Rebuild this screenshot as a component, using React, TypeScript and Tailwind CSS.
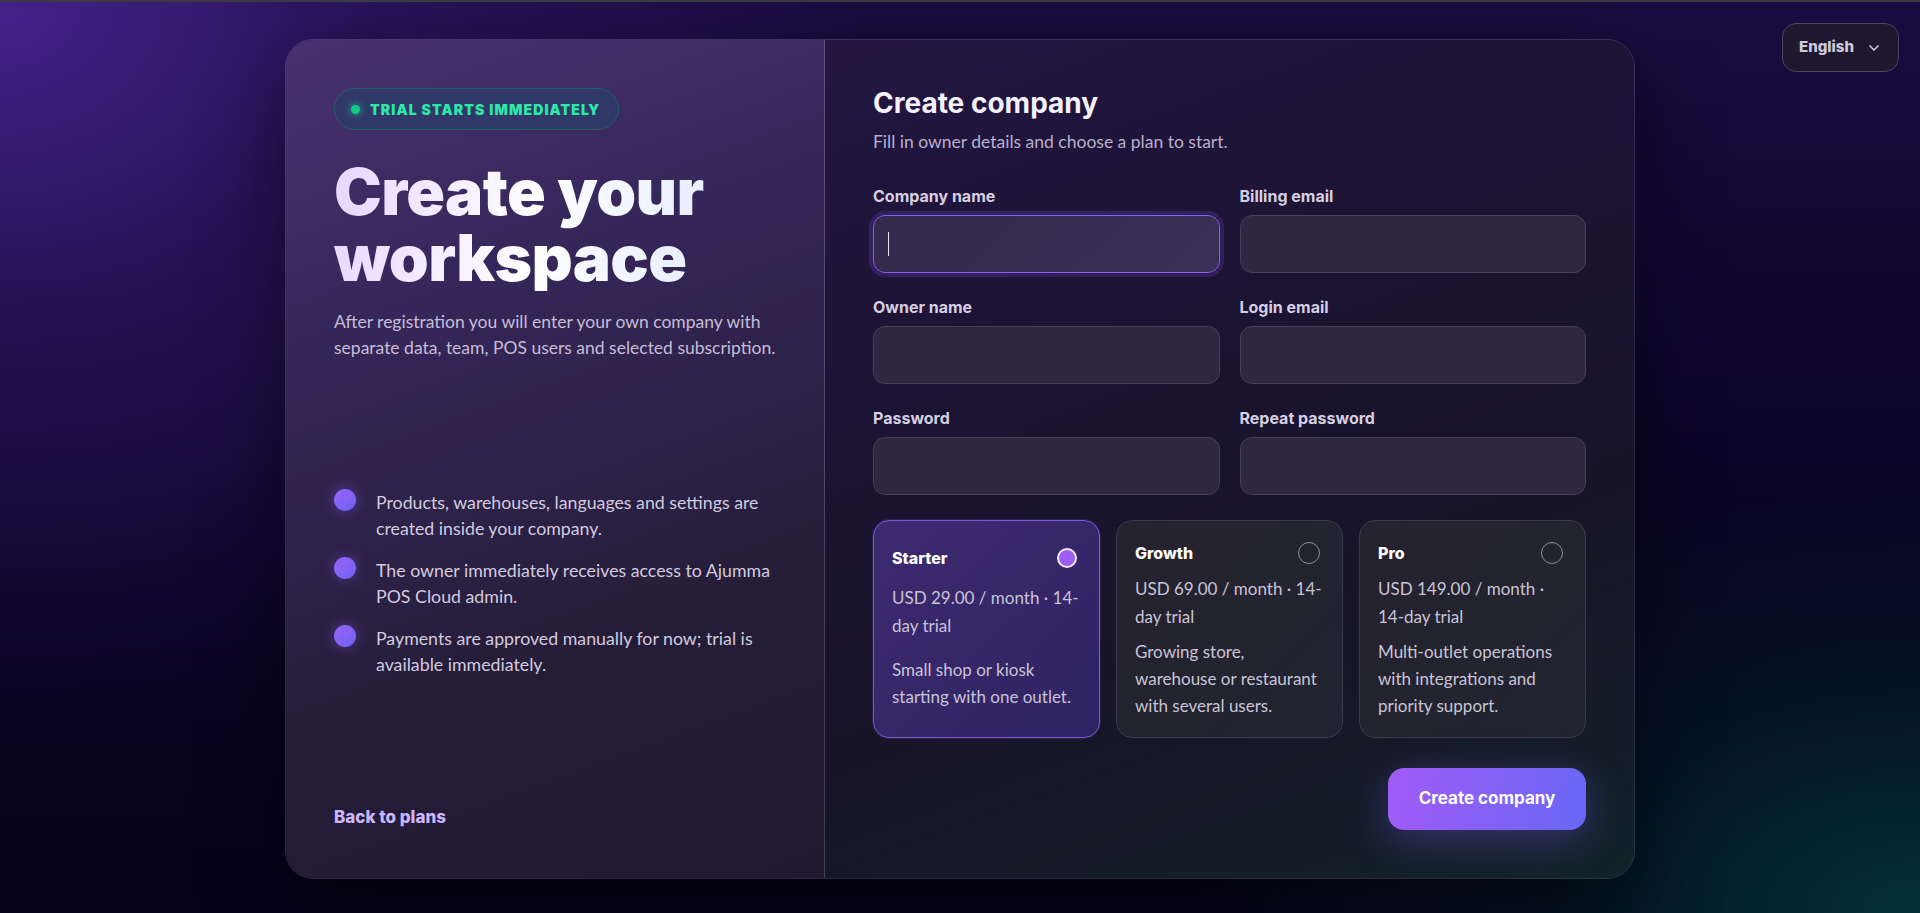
import { ChevronDown } from 'lucide-react';

const fields = [
  { label: 'Company name', type: 'text', focused: true },
  { label: 'Billing email', type: 'email' },
  { label: 'Owner name', type: 'text' },
  { label: 'Login email', type: 'email' },
  { label: 'Password', type: 'password' },
  { label: 'Repeat password', type: 'password' },
];

const perks = [
  'Products, warehouses, languages and settings are created inside your company.',
  'The owner immediately receives access to Ajumma POS Cloud admin.',
  'Payments are approved manually for now; trial is available immediately.',
];

const plans = [
  { name: 'Starter', price: 'USD 29.00 / month · 14-day trial', desc: 'Small shop or kiosk starting with one outlet.', selected: true },
  { name: 'Growth', price: 'USD 69.00 / month · 14-day trial', desc: 'Growing store, warehouse or restaurant with several users.' },
  { name: 'Pro', price: 'USD 149.00 / month · 14-day trial', desc: 'Multi-outlet operations with integrations and priority support.' },
];

function PlanCard({ plan }: { plan: (typeof plans)[number] }) {
  return (
    <label
      className={`grid rounded-2xl border px-[18px] pt-5 pb-[18px] ${
        plan.selected
          ? 'border-[#7a5ad6] bg-[linear-gradient(135deg,#3d2a70_0%,#2e2462_100%)] shadow-[0_0_0_1px_rgba(139,92,246,0.15)]'
          : 'border-[#3c3a4c] bg-[linear-gradient(135deg,#26222f_0%,#1f2530_100%)]'
      }`}
    >
      <div className="flex items-center justify-between">
        <span className="font-['Inter',sans-serif] text-[16px] font-extrabold text-white">{plan.name}</span>
        {plan.selected ? (
          <span className="mr-[4px] h-5 w-5 rounded-full border-2 border-[#efeaff] bg-[#9d5cf7]" />
        ) : (
          <span className="mr-[4px] h-[22px] w-[22px] rounded-full border-[1.5px] border-[#8d8a99]" />
        )}
      </div>
      <p className="mt-[10px] text-[17px] leading-[28px] text-[#c9c3d6]">{plan.price}</p>
      <p className="mt-[7px] text-[17px] leading-[27px] text-[#c9c3d6]">{plan.desc}</p>
    </label>
  );
}

export default function App() {
  return (
    <div className="relative min-h-screen overflow-hidden border-t-2 border-[#3a3a40] bg-[#07031a] bg-[radial-gradient(ellipse_45%_80%_at_0%_0%,#44228a_0%,rgba(52,26,110,0.6)_40%,transparent_100%),radial-gradient(ellipse_38%_48%_at_100%_100%,#03313a_0%,rgba(2,32,42,0.55)_50%,transparent_100%),linear-gradient(180deg,#190c40_0%,#0a0426_55%,#06021a_100%)] font-['Lato',sans-serif] text-white">
      <button className="absolute right-[21px] top-[21px] flex h-[49px] items-center gap-3 rounded-[14px] border border-[#4a4360] bg-[#1f1930] px-4 font-['Inter',sans-serif] text-[15px] font-extrabold text-[#d0c9de]">
        English
        <ChevronDown className="h-4 w-4" strokeWidth={2.5} />
      </button>

      <div className="flex justify-center pt-[37px] pb-[35px]">
        <div className="grid w-[1350px] grid-cols-[539px_1fr] overflow-hidden rounded-[28px] border border-white/15 shadow-[0_30px_80px_rgba(0,0,0,0.5)]">
          {/* left intro */}
          <section className="flex flex-col border-r border-white/15 bg-[linear-gradient(160deg,#49316f_0%,#35275a_30%,#251d38_70%,#211a30_100%)] p-12">
            <div className="flex h-[42px] w-fit items-center gap-[10px] rounded-full border border-[#1f6068] bg-[#2f3a68]/90 pl-[16px] pr-[18px]">
              <span className="h-[9px] w-[9px] rounded-full bg-[#16c98b] shadow-[0_0_8px_#16c98b]" />
              <span className="font-['Inter',sans-serif] text-[14px] font-black uppercase tracking-[0.08em] text-[#2ee8a8]">
                Trial starts immediately
              </span>
            </div>

            <h1 className="mt-[29px] bg-[linear-gradient(100deg,#e6d6ff_0%,#ffffff_45%,#dde6ff_100%)] bg-clip-text font-['Inter',sans-serif] text-[64px] font-black leading-[66px] tracking-[-0.01em] text-transparent">
              Create your
              <br />
              workspace
            </h1>
            <p className="mt-[18px] text-[17.5px] leading-[26px] text-[#c6bdd6]">
              After registration you will enter your own company with separate data, team, POS users and selected subscription.
            </p>

            <ul className="mt-[128px] flex flex-col gap-4">
              {perks.map((perk) => (
                <li key={perk} className="flex gap-5">
                  <span className="h-[22px] w-[22px] shrink-0 rounded-full bg-[linear-gradient(135deg,#9a63f7_0%,#6c63f2_100%)] shadow-[0_0_14px_rgba(139,92,246,0.45)]" />
                  <span className="text-[17.75px] leading-[26px] text-[#d2cadf]">{perk}</span>
                </li>
              ))}
            </ul>

            <a href="#" className="mt-auto font-['Inter',sans-serif] text-[17px] font-extrabold text-[#c9b6ff]">
              Back to plans
            </a>
          </section>

          {/* right form */}
          <section className="flex flex-col bg-[linear-gradient(160deg,#231742_0%,#1b1333_35%,#171427_65%,#122329_100%)] p-12">
            <h2 className="font-['Inter',sans-serif] text-[28px] font-bold leading-[30px] text-[#f5f1ff]">Create company</h2>
            <p className="mt-3 text-[17.5px] leading-6 text-[#b9afcc]">Fill in owner details and choose a plan to start.</p>

            <div className="mt-8 grid grid-cols-2 gap-x-5 gap-y-6">
              {fields.map((f) => (
                <div key={f.label} className="flex flex-col gap-[9px]">
                  <span className="font-['Inter',sans-serif] text-[16px] font-bold leading-5 text-[#d6cfe2]">{f.label}</span>
                  <div className="relative">
                    <input
                      type={f.type}
                      className={`h-[58px] w-full rounded-xl border px-4 text-[16px] text-white caret-transparent outline-none ${
                        f.focused
                          ? 'border-[#8d5cf0] bg-[linear-gradient(135deg,#332a4d_0%,#3a2f55_100%)] shadow-[0_0_0_4px_rgba(124,77,220,0.22)]'
                          : 'border-[#474058] bg-[linear-gradient(135deg,#2e2740_0%,#2f2742_100%)]'
                      }`}
                    />
                    {f.focused && <span className="pointer-events-none absolute left-[15px] top-[17px] h-[24px] w-px bg-[#e8e2f4]" />}
                  </div>
                </div>
              ))}
            </div>

            <div className="mt-[25px] grid grid-cols-3 gap-4">
              {plans.map((p) => (
                <PlanCard key={p.name} plan={p} />
              ))}
            </div>

            <div className="mt-[30px] flex justify-end">
              <button className="h-[62px] w-[198px] rounded-2xl bg-[linear-gradient(100deg,#a25bf6_0%,#6767f5_100%)] font-['Inter',sans-serif] text-[17px] font-bold text-white shadow-[0_10px_40px_rgba(120,90,240,0.35)]">
                Create company
              </button>
            </div>
          </section>
        </div>
      </div>
    </div>
  );
}
